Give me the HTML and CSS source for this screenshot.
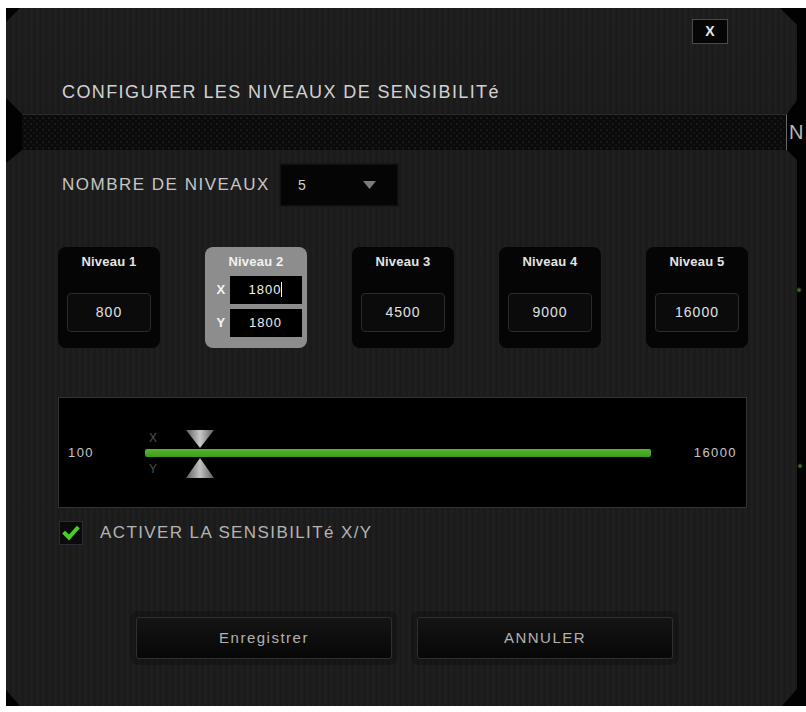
FILE: index.html
```html
<!DOCTYPE html>
<html lang="fr">
<head>
<meta charset="utf-8">
<title>Configurer les niveaux de sensibilité</title>
<link rel="stylesheet" href="styles.css">
</head>
<body>
<div class="frame">
  <div class="top">
    <div class="close-row"><div class="close">X</div></div>
    <div class="title">CONFIGURER LES NIVEAUX DE SENSIBILITé</div>
  </div>
  <div class="band-row">
    <div class="band"></div>
    <div class="behind-tab">N</div>
  </div>
  <div class="main">
    <div class="count-row">
      <div class="count-label">NOMBRE DE NIVEAUX</div>
      <div class="select">
        <span class="select-value">5</span>
        <svg class="select-arrow" width="15" height="10" viewBox="0 0 15 10"><polygon points="1,1 14,1 7.5,9" fill="#7c7c7c"/></svg>
      </div>
    </div>

    <div class="cards">
      <div class="card">
        <div class="card-title">Niveau 1</div>
        <div class="card-input">800</div>
      </div>
      <div class="card card-active">
        <div class="card-title">Niveau 2</div>
        <div class="xy-grid">
          <span class="xy-label">X</span><span class="xy-box">1800<span class="caret"></span></span>
          <span class="xy-label">Y</span><span class="xy-box">1800</span>
        </div>
      </div>
      <div class="card">
        <div class="card-title">Niveau 3</div>
        <div class="card-input">4500</div>
      </div>
      <div class="card">
        <div class="card-title">Niveau 4</div>
        <div class="card-input">9000</div>
      </div>
      <div class="card">
        <div class="card-title">Niveau 5</div>
        <div class="card-input">16000</div>
      </div>
    </div>

    <div class="slider">
      <span class="slider-min">100</span>
      <div class="track">
        <span class="axis axis-x">X</span>
        <span class="axis axis-y">Y</span>
        <svg class="handle handle-x" width="28" height="18" viewBox="0 0 28 18">
          <defs>
            <linearGradient id="hg1" x1="0" y1="0" x2="1" y2="0">
              <stop offset="0" stop-color="#5c5c5c"/>
              <stop offset="0.5" stop-color="#c9c9c9"/>
              <stop offset="1" stop-color="#5c5c5c"/>
            </linearGradient>
          </defs>
          <polygon points="0,0 28,0 14,18" fill="url(#hg1)"/>
        </svg>
        <svg class="handle handle-y" width="28" height="20" viewBox="0 0 28 20">
          <defs>
            <linearGradient id="hg2" x1="0" y1="0" x2="1" y2="0">
              <stop offset="0" stop-color="#5c5c5c"/>
              <stop offset="0.5" stop-color="#c2c2c2"/>
              <stop offset="1" stop-color="#5c5c5c"/>
            </linearGradient>
          </defs>
          <polygon points="14,0 28,20 0,20" fill="url(#hg2)"/>
        </svg>
      </div>
      <span class="slider-max">16000</span>
    </div>

    <div class="check-row">
      <span class="checkbox">
        <svg width="22" height="22" viewBox="0 0 22 22"><path d="M5 11.5 L9 15.5 L17 6.5" fill="none" stroke="#47cf24" stroke-width="4" stroke-linecap="square"/></svg>
      </span>
      <span class="check-label">ACTIVER LA SENSIBILITé X/Y</span>
    </div>

    <div class="buttons">
      <div class="btn">Enregistrer</div>
      <div class="btn">ANNULER</div>
    </div>
  </div>
</div>
</body>
</html>
```

FILE: styles.css
```css
html, body {
  margin: 0;
  padding: 0;
  background: #ffffff;
}

body {
  font-family: "Liberation Sans", Arial, sans-serif;
}

.frame {
  margin: 8px 0 0 6px;
  width: 800px;
  height: 698px;
  background:
    radial-gradient(circle at 793px 282px, rgba(90, 160, 50, 0.9) 0, rgba(90, 160, 50, 0) 3px),
    radial-gradient(circle at 794px 458px, rgba(90, 160, 50, 0.9) 0, rgba(90, 160, 50, 0) 3px),
    #020202;
  display: flex;
  flex-direction: column;
  overflow: hidden;
}

.top,
.main {
  width: 791px;
  background:
    repeating-linear-gradient(90deg, rgba(255,255,255,0.012) 0 3px, rgba(0,0,0,0.05) 3px 6px),
    #1c1c1c;
}

.top {
  height: 106px;
  clip-path: polygon(14px 0, calc(100% - 17px) 0, 100% 17px, 100% 92px, calc(100% - 10px) 100%, 16px 100%, 0 90px, 0 14px);
  background:
    repeating-linear-gradient(90deg, rgba(255,255,255,0.012) 0 3px, rgba(0,0,0,0.05) 3px 6px),
    linear-gradient(#1d1d1d, #1b1b1b);
}

.close-row {
  display: flex;
  justify-content: flex-end;
  padding: 11px 69px 0 0;
}

.close {
  width: 34px;
  height: 23px;
  border: 1px solid #4a4a4a;
  background: #060606;
  color: #e6e6e6;
  font-weight: bold;
  font-size: 14px;
  line-height: 23px;
  text-align: center;
}

.title {
  margin-top: 37px;
  padding-left: 56px;
  font-size: 18px;
  line-height: 22px;
  letter-spacing: 1.4px;
  color: #d2d2d2;
}

.band-row {
  height: 36px;
  display: flex;
  align-items: stretch;
}

.band {
  margin-left: 16px;
  width: 764px;
  border-top: 1px solid #2a2a2a;
  border-right: 1px solid #6a6a6a;
  background:
    radial-gradient(circle, #1a1a1a 1px, rgba(0,0,0,0) 1.6px) 0 0 / 6px 6px,
    radial-gradient(circle, #141414 1px, rgba(0,0,0,0) 1.6px) 3px 3px / 6px 6px,
    #0a0a0a;
}

.behind-tab {
  margin-left: 2px;
  padding-top: 8px;
  font-size: 20px;
  line-height: 20px;
  color: #b8b8b8;
}

.main {
  height: 556px;
  box-sizing: border-box;
  padding: 14px 0 0 52px;
  clip-path: polygon(16px 0, calc(100% - 10px) 0, 100% 10px, 100% calc(100% - 17px), calc(100% - 15px) 100%, 14px 100%, 0 calc(100% - 16px), 0 13px);
}

.count-row {
  display: grid;
  grid-template-columns: 218px 118px;
  align-items: center;
  padding-left: 4px;
  height: 42px;
}

.count-label {
  font-size: 17px;
  letter-spacing: 1.5px;
  color: #c6c6c6;
}

.select {
  height: 42px;
  box-sizing: border-box;
  border: 1px solid #111111;
  background: #050505;
  box-shadow: 0 0 0 1px #161616;
  display: flex;
  align-items: center;
  padding: 0 20px 0 17px;
}

.select-value {
  flex: 1;
  font-size: 14px;
  color: #cfcfcf;
}

.select-arrow {
  display: block;
}

.cards {
  margin-top: 41px;
  display: flex;
  gap: 45px;
}

.card {
  width: 102px;
  height: 101px;
  background: #050505;
  border-radius: 8px;
  display: flex;
  flex-direction: column;
  align-items: center;
}

.card-title {
  height: 30px;
  line-height: 30px;
  font-size: 13px;
  font-weight: bold;
  color: #e4e4e4;
  letter-spacing: 0.2px;
}

.card-input {
  margin-top: 16px;
  width: 84px;
  height: 39px;
  box-sizing: border-box;
  border: 1px solid #2b2b2b;
  border-radius: 4px;
  background: #0b0b0b;
  color: #e0e0e0;
  font-size: 14px;
  letter-spacing: 1px;
  line-height: 37px;
  text-align: center;
}

.card-active {
  background: #8d8d8d;
}

.card-active .card-title {
  height: 29px;
  line-height: 30px;
  color: #f2f2f2;
}

.xy-grid {
  display: grid;
  grid-template-columns: 13px 72px;
  grid-auto-rows: 28px;
  row-gap: 5px;
  margin-left: 6px;
}

.xy-label {
  font-size: 13px;
  font-weight: bold;
  color: #f4f4f4;
  line-height: 28px;
  text-align: left;
}

.xy-box {
  background: #000000;
  color: #f0f0f0;
  font-size: 13px;
  letter-spacing: 1px;
  line-height: 28px;
  text-align: center;
}

.caret {
  display: inline-block;
  width: 1px;
  height: 15px;
  background: #ffffff;
  vertical-align: -3px;
}

.slider {
  margin-top: 49px;
  width: 689px;
  height: 111px;
  box-sizing: border-box;
  border: 1px solid #333333;
  background: #000000;
  display: grid;
  grid-template-columns: 77px 506px 1fr;
  align-items: center;
  padding: 0 9px;
}

.slider-min,
.slider-max {
  font-size: 13px;
  letter-spacing: 1.4px;
  color: #c8c8c8;
}

.slider-max {
  text-align: right;
}

.track {
  position: relative;
  height: 8px;
  border-radius: 2px;
  background: linear-gradient(#56b82d, #3f9a1d);
}

.axis {
  position: absolute;
  left: 4px;
  font-size: 12px;
  line-height: 14px;
  color: #505050;
}

.axis-x {
  top: -18px;
}

.axis-y {
  top: 13px;
}

.handle {
  position: absolute;
  left: 41px;
  display: block;
}

.handle-x {
  top: -19px;
}

.handle-y {
  top: 9px;
}

.check-row {
  margin-top: 13px;
  display: flex;
  align-items: center;
  height: 24px;
  padding-left: 1px;
}

.checkbox {
  width: 22px;
  height: 22px;
  border: 1px solid #2e2a33;
  background: #0a0a0a;
  display: block;
}

.checkbox svg {
  display: block;
}

.check-label {
  margin-left: 17px;
  font-size: 17px;
  letter-spacing: 1.4px;
  color: #b4b4b4;
}

.buttons {
  margin-top: 72px;
  margin-left: 78px;
  display: flex;
  gap: 25px;
}

.btn {
  width: 256px;
  height: 42px;
  box-sizing: border-box;
  border: 1px solid #2f2f2f;
  border-radius: 3px;
  background: linear-gradient(#141414, #070707);
  box-shadow: 0 0 0 6px rgba(0, 0, 0, 0.22);
  color: #b2b2b2;
  font-size: 15px;
  letter-spacing: 1.5px;
  line-height: 40px;
  text-align: center;
}
```
